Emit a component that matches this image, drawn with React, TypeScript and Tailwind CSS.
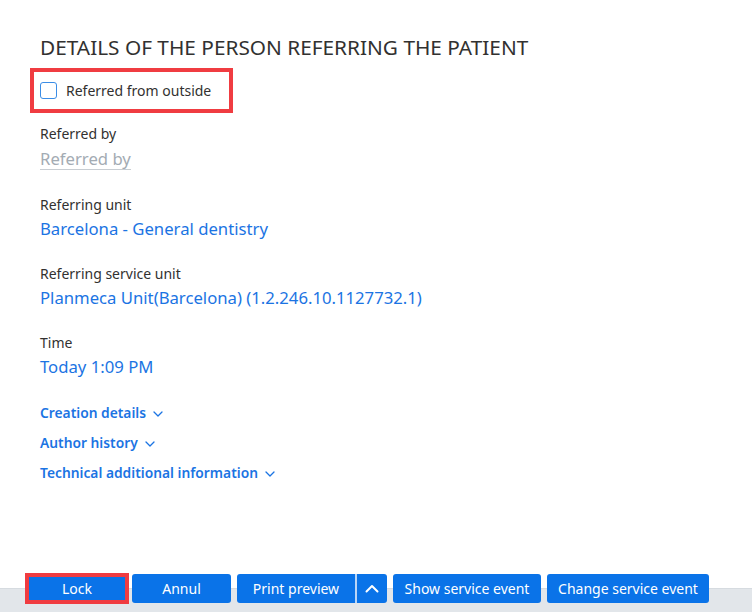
import React from "react";

const font = { fontFamily: '"Noto Sans", "Open Sans", Arial, sans-serif' };

function ChevronDown() {
  return (
    <svg width="10" height="6" viewBox="0 0 10 6" fill="none" className="ml-[7px] mt-[2px]">
      <path d="M1 1l4 4 4-4" stroke="currentColor" strokeWidth="1.3" strokeLinecap="round" strokeLinejoin="round" />
    </svg>
  );
}

function ChevronUp() {
  return (
    <svg width="14" height="9" viewBox="0 0 14 9" fill="none">
      <path d="M1.5 7.5L7 2l5.5 5.5" stroke="white" strokeWidth="2" strokeLinecap="round" strokeLinejoin="round" />
    </svg>
  );
}

function Field({ label, value, first }: { label: string; value: string; first?: boolean }) {
  return (
    <div className={first ? "mt-[25px]" : "mt-[23px]"}>
      <div className="text-[14px] leading-[20px] text-[#323130]">{label}</div>
      <div className="mt-[2px] text-[16.7px] leading-[24px] text-[#1b74e3]">{value}</div>
    </div>
  );
}

function Expander({ text }: { text: string }) {
  return (
    <div className="flex items-center h-[20px] text-[13.8px] font-semibold text-[#1b74e3]">
      {text}
      <ChevronDown />
    </div>
  );
}

const btn =
  "h-[29px] flex items-center justify-center rounded-[3px] bg-[#0a73e8] text-white text-[14px]";

export default function App() {
  return (
    <div className="h-[612px] w-[752px] flex flex-col bg-white overflow-hidden" style={font}>
      <main className="flex-1 pl-[40px] pt-[33px]">
        <h1 className="text-[20.8px] leading-[28px] text-[#323130] font-normal">
          DETAILS OF THE PERSON REFERRING THE PATIENT
        </h1>

        <div className="mt-[7px] -ml-[10px] w-[203px] h-[45px] border-4 border-[#f03c41] flex items-center pl-[6px]">
          <span className="w-[17px] h-[17px] rounded-[3px] border-[1.5px] border-[#3b8de6] bg-white" />
          <span className="ml-[9px] text-[14px] text-[#323130]">Referred from outside</span>
        </div>

        <div className="mt-[11px]">
          <div className="text-[14px] leading-[20px] text-[#323130]">Referred by</div>
          <div className="mt-[4px] w-[91px] h-[22px] border-b border-[#c8cdd2] text-[16.7px] leading-[22px] text-[#a3abb3] whitespace-nowrap">
            Referred by
          </div>
        </div>

        <Field first label="Referring unit" value="Barcelona - General dentistry" />
        <Field label="Referring service unit" value="Planmeca Unit(Barcelona) (1.2.246.10.1127732.1)" />
        <Field label="Time" value="Today 1:09 PM" />

        <div className="mt-[24px] flex flex-col gap-[10px]">
          <Expander text="Creation details" />
          <Expander text="Author history" />
          <Expander text="Technical additional information" />
        </div>
      </main>

      <footer className="h-[41px] pt-[3px] pl-[28px] flex items-start gap-[6px] bg-[linear-gradient(to_bottom,#ffffff_17px,#d6dbe0_17px,#d6dbe0_18px,#e2e6ea_18px)]">
        <div className="relative">
          <button className={`${btn} w-[98px]`}>Lock</button>
          <div className="absolute left-[-3px] right-[-3px] top-[-1px] bottom-[-1px] border-4 border-[#f03c41] pointer-events-none" />
        </div>
        <button className={`${btn} w-[99px]`}>Annul</button>
        <div className="flex">
          <button className={`${btn} w-[118px] rounded-r-none`}>Print preview</button>
          <div className="w-[2px] h-[29px] bg-[#b9d5f7]" />
          <button className={`${btn} w-[30px] rounded-l-none`}>
            <ChevronUp />
          </button>
        </div>
        <button className={`${btn} w-[148px]`}>Show service event</button>
        <button className={`${btn} w-[162px]`}>Change service event</button>
      </footer>
    </div>
  );
}
